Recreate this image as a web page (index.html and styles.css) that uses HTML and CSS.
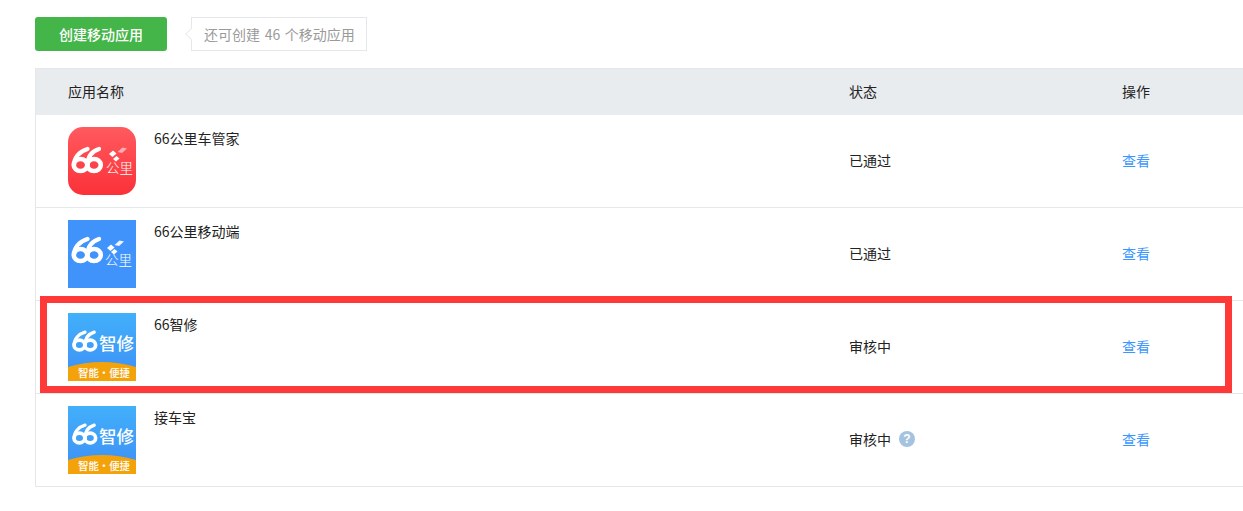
FILE: index.html
```html
<!DOCTYPE html>
<html lang="zh-CN">
<head>
<meta charset="utf-8">
<title>移动应用</title>
<link rel="stylesheet" href="styles.css">
</head>
<body>
<svg class="defs" width="0" height="0" aria-hidden="true">
  <defs>
    <g id="six6" fill="none" stroke="#fff" stroke-linecap="round">
      <path d="M4.600 23.500C4.300 16 10 10 18 7.500" stroke-width="4.200"/>
      <ellipse cx="11" cy="23.500" rx="6.800" ry="6" stroke-width="4.600"/>
      <path d="M18.200 23.500C18 16 22 10 29.500 7.500" stroke-width="4.200"/>
      <ellipse cx="24.500" cy="23.500" rx="6.800" ry="6" stroke-width="4.600"/>
    </g>
    <linearGradient id="gradRed" x1="0" y1="0" x2="0" y2="1">
      <stop offset="0" stop-color="#ff5a5f"/><stop offset="1" stop-color="#fb3138"/>
    </linearGradient>
    <linearGradient id="gradBlue" x1="0" y1="0" x2="0" y2="1">
      <stop offset="0" stop-color="#42b0fb"/><stop offset="1" stop-color="#3d8ef5"/>
    </linearGradient>
  </defs>
</svg>

<div class="toolbar">
  <a class="btn">创建移动应用</a>
  <div class="quota">还可创建 46 个移动应用</div>
</div>

<div class="table">
  <div class="row head">
    <div class="c-name">应用名称</div>
    <div class="c-status">状态</div>
    <div class="c-op">操作</div>
  </div>

  <div class="row item">
    <div class="c-name app">
      <svg class="icon" viewBox="0 0 68 68">
        <rect width="68" height="68" rx="15" fill="url(#gradRed)"/>
        <g transform="translate(1.500 14.500)"><use href="#six6"/></g>
        <path d="M41 27l4-3.500 3.500 3-4 3.500z" fill="#fff"/>
        <path d="M45 32l3.500-3 3 2.500-3.500 3z" fill="#fff"/>
        <path d="M49.500 25l5-4.500 4.500 1-5 4.500z" fill="#fff" opacity=".55"/>
        <text class="gl-sm" x="38" y="46">公里</text>
      </svg>
      <div class="title">66公里车管家</div>
    </div>
    <div class="c-status">已通过</div>
    <div class="c-op"><a class="link">查看</a></div>
  </div>

  <div class="row item">
    <div class="c-name app">
      <svg class="icon" viewBox="0 0 68 68">
        <rect width="68" height="68" fill="#3f93fb"/>
        <g transform="translate(1.500 11.500)"><use href="#six6"/></g>
        <path d="M39 28l4-3.500 3.500 3-4 3.500z" fill="#fff"/>
        <path d="M43 32l3.500-3 3 2.500-3.500 3z" fill="#fff"/>
        <path d="M46.500 25l5-4.500 4.500 1-5 4.500z" fill="#fff" opacity=".9"/>
        <text class="gl-sm" x="37" y="45">公里</text>
      </svg>
      <div class="title">66公里移动端</div>
    </div>
    <div class="c-status">已通过</div>
    <div class="c-op"><a class="link">查看</a></div>
  </div>

  <div class="row item">
    <div class="c-name app">
      <svg class="icon" viewBox="0 0 68 68">
        <rect width="68" height="68" fill="url(#gradBlue)"/>
        <path d="M0 54Q34 44 68 54V68H0z" fill="#f4a20a"/>
        <g transform="translate(2.600 13.200) scale(.8)"><use href="#six6"/></g>
        <text class="gl-lg" x="31" y="36.500">智修</text>
        <text class="gl-xs" x="10" y="64">智能・便捷</text>
      </svg>
      <div class="title">66智修</div>
    </div>
    <div class="c-status">审核中</div>
    <div class="c-op"><a class="link">查看</a></div>
  </div>

  <div class="row item">
    <div class="c-name app">
      <svg class="icon" viewBox="0 0 68 68">
        <rect width="68" height="68" fill="url(#gradBlue)"/>
        <path d="M0 54Q34 44 68 54V68H0z" fill="#f4a20a"/>
        <g transform="translate(2.600 13.200) scale(.8)"><use href="#six6"/></g>
        <text class="gl-lg" x="31" y="36.500">智修</text>
        <text class="gl-xs" x="10" y="64">智能・便捷</text>
      </svg>
      <div class="title">接车宝</div>
    </div>
    <div class="c-status">审核中<span class="help">?</span></div>
    <div class="c-op"><a class="link">查看</a></div>
  </div>
</div>

<div class="highlight"></div>
</body>
</html>
```

FILE: styles.css
```css
html, body {
  margin: 0;
  padding: 0;
  background: #fff;
  overflow: hidden;
}
body {
  position: relative;
  height: 511px;
  padding: 17px 0 0 35px;
  box-sizing: border-box;
  font-family: "Noto Sans CJK SC", "Liberation Sans", sans-serif;
  font-size: 14px;
  color: #222;
}
.defs { position: absolute; }

.toolbar {
  display: flex;
  align-items: stretch;
  height: 34px;
  margin-bottom: 17px;
}
.btn {
  width: 132px;
  display: flex;
  align-items: center;
  justify-content: center;
  background: #44b549;
  color: #fff;
  font-weight: 500;
  border-radius: 3px;
}
.quota {
  position: relative;
  margin-left: 24px;
  width: 176px;
  box-sizing: border-box;
  padding-left: 12px;
  display: flex;
  align-items: center;
  border: 1px solid #e4e8eb;
  color: #9a9a9a;
  white-space: nowrap;
  word-spacing: 1.500px;
}
.quota::before {
  content: "";
  position: absolute;
  left: -6px;
  top: 11px;
  width: 9px;
  height: 9px;
  background: #fff;
  border-left: 1px solid #e4e8eb;
  border-bottom: 1px solid #e4e8eb;
  transform: rotate(45deg) scale(.8);
}

.table {
  width: 1208px;
  border-left: 1px solid #e7e7eb;
  box-sizing: border-box;
}
.row {
  display: grid;
  grid-template-columns: 781px 273px 1fr;
  padding-left: 32px;
}
.head {
  height: 47px;
  align-items: center;
  padding-bottom: 2px;
  background: #e9ecef;
  border-top: 1px solid #e4e8eb;
  box-sizing: border-box;
}
.item {
  height: 93px;
  box-sizing: border-box;
  border-bottom: 1px solid #e4e8eb;
  align-items: center;
}
.c-status, .c-op {
  display: flex;
  align-items: center;
}
.item .c-status, .item .c-op { padding-bottom: 2px; }
.app {
  display: flex;
  align-items: flex-start;
  height: 68px;
  gap: 18px;
}
.icon { width: 68px; height: 68px; flex: none; }
.title { line-height: 22px; }
.link { color: #3b97ff; }
.help {
  width: 16px;
  height: 16px;
  margin-left: 8px;
  border-radius: 50%;
  background: #a5c3de;
  color: #fff;
  font: bold 12px/16px "Liberation Sans", sans-serif;
  text-align: center;
}

.gl-sm { fill: #fff; font-size: 13.500px; font-weight: 300; }
.gl-lg { fill: #fff; font-size: 17.500px; font-weight: 500; }
.gl-xs { fill: #fff; font-size: 10.400px; font-weight: 500; }

.highlight {
  position: absolute;
  left: 40px;
  top: 296px;
  width: 1192px;
  height: 97px;
  box-sizing: border-box;
  border: 7px solid #ff3838;
  pointer-events: none;
}
```
